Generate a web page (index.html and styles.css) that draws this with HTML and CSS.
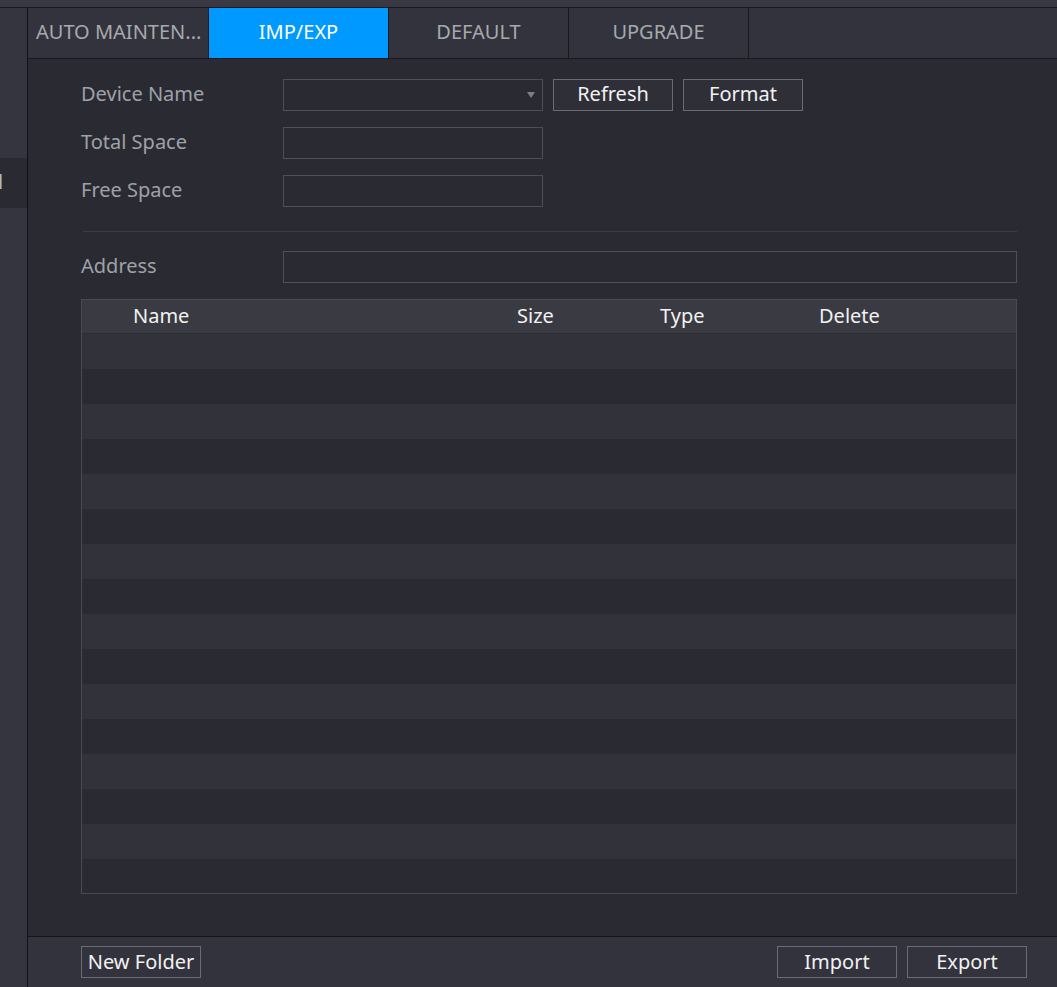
FILE: index.html
```html
<!DOCTYPE html>
<html>
<head>
<meta charset="utf-8">
<link rel="stylesheet" href="styles.css">
</head>
<body>
<div class="topstrip"></div>
<div class="main">
  <aside class="sidebar">
    <div class="side-item"></div>
    <div class="side-item"></div>
    <div class="side-item"></div>
    <div class="side-item selected"><span class="side-text">l</span></div>
  </aside>
  <section class="panel">
    <nav class="tabs">
      <div class="tab first">AUTO MAINTEN...</div>
      <div class="tab active">IMP/EXP</div>
      <div class="tab">DEFAULT</div>
      <div class="tab">UPGRADE</div>
    </nav>
    <div class="content">
      <div class="row">
        <label class="label">Device Name</label>
        <div class="input select"><span class="caret"></span></div>
        <button class="btn">Refresh</button>
        <button class="btn">Format</button>
      </div>
      <div class="row">
        <label class="label">Total Space</label>
        <div class="input"></div>
      </div>
      <div class="row">
        <label class="label">Free Space</label>
        <div class="input"></div>
      </div>
      <div class="divider"></div>
      <div class="row">
        <label class="label">Address</label>
        <div class="input wide"></div>
      </div>
      <div class="table">
        <div class="thead">
          <div class="th c1">Name</div>
          <div class="th c2">Size</div>
          <div class="th c3">Type</div>
          <div class="th c4">Delete</div>
        </div>
        <div class="tbody">
          <div class="tr"></div><div class="tr"></div><div class="tr"></div><div class="tr"></div>
          <div class="tr"></div><div class="tr"></div><div class="tr"></div><div class="tr"></div>
          <div class="tr"></div><div class="tr"></div><div class="tr"></div><div class="tr"></div>
          <div class="tr"></div><div class="tr"></div><div class="tr"></div><div class="tr"></div>
        </div>
      </div>
    </div>
    <footer class="footer">
      <button class="btn foot">New Folder</button>
      <div class="spacer"></div>
      <button class="btn foot">Import</button>
      <button class="btn foot">Export</button>
    </footer>
  </section>
</div>
</body>
</html>
```

FILE: styles.css
```css
* { box-sizing: border-box; }
html, body {
  margin: 0;
  padding: 0;
  width: 1057px;
  height: 987px;
  overflow: hidden;
  background: #2a2a33;
  font-family: "Noto Sans", "Liberation Sans", sans-serif;
  font-size: 20px;
}
.topstrip {
  height: 8px;
  background: #393943;
  border-bottom: 1px solid #18181e;
}
.main {
  display: flex;
  height: 979px;
}
.sidebar {
  width: 28px;
  background: #35353f;
  border-right: 1px solid #111116;
  display: flex;
  flex-direction: column;
  overflow: hidden;
}
.side-item {
  height: 50px;
  flex: none;
}
.side-item.selected {
  background: #2a2a33;
  color: #b4b8bc;
  line-height: 48px;
  font-size: 20px;
  white-space: nowrap;
  overflow: hidden;
}
.side-text {
  display: inline-block;
  margin-left: -2px;
}
.panel {
  flex: 1;
  display: flex;
  flex-direction: column;
  min-width: 0;
}
.tabs {
  height: 51px;
  flex: none;
  display: flex;
  background: #33333d;
  border-bottom: 1px solid #18181e;
}
.tab {
  width: 180px;
  border-right: 1px solid #18181e;
  color: #a6aaae;
  text-align: center;
  line-height: 48px;
  white-space: nowrap;
}
.tab.first {
  width: 181px;
  text-align: left;
  padding-left: 8px;
}
.tab.active {
  background: #0099ff;
  color: #ffffff;
}
.content {
  flex: 1;
  background: #2a2a33;
  padding: 20px 40px 0 53px;
  border-bottom: 1px solid #141419;
}
.row {
  display: flex;
  align-items: center;
  height: 32px;
  margin-bottom: 16px;
}
.label {
  width: 202px;
  color: #9ea2a7;
  line-height: 30px;
  padding-bottom: 2px;
}
.input {
  width: 260px;
  height: 32px;
  border: 1px solid #4f4f58;
  background: #2a2a33;
  position: relative;
}
.input.wide {
  width: 734px;
}
.caret {
  position: absolute;
  right: 7px;
  top: 12px;
  width: 0;
  height: 0;
  border-left: 4px solid transparent;
  border-right: 4px solid transparent;
  border-top: 6px solid #7d7d85;
}
.btn {
  width: 120px;
  height: 32px;
  margin-left: 10px;
  border: 1px solid #6b6b73;
  background: #2f2f38;
  color: #f2f2f2;
  font-family: inherit;
  font-size: 20px;
  line-height: 26px;
  padding: 0 0 2px 0;
  cursor: pointer;
}
.divider {
  height: 1px;
  background: #3c3c46;
  margin: 24px 0 19px 2px;
  width: 934px;
}
.table {
  width: 936px;
  height: 595px;
  border: 1px solid #4a4a53;
  overflow: hidden;
}
.thead {
  display: flex;
  height: 34px;
  background: #3a3a43;
  border-bottom: 1px solid #2c2c33;
}
.th {
  color: #f2f2f2;
  line-height: 31px;
  white-space: nowrap;
}
.c1 { width: 435px; padding-left: 51px; }
.c2 { width: 143px; }
.c3 { width: 159px; }
.c4 { flex: 1; }
.tr {
  height: 35px;
}
.tr:nth-child(odd) { background: #32323b; }
.tr:nth-child(even) { background: #2a2a33; }
.footer {
  height: 50px;
  flex: none;
  background: #33333d;
  display: flex;
  align-items: flex-start;
  padding: 9px 30px 0 53px;
}
.footer .btn.foot {
  background: #33333d;
  line-height: 30px;
  padding: 0;
}
.footer .btn.foot:first-child {
  margin-left: 0;
}
.spacer { flex: 1; }
```
